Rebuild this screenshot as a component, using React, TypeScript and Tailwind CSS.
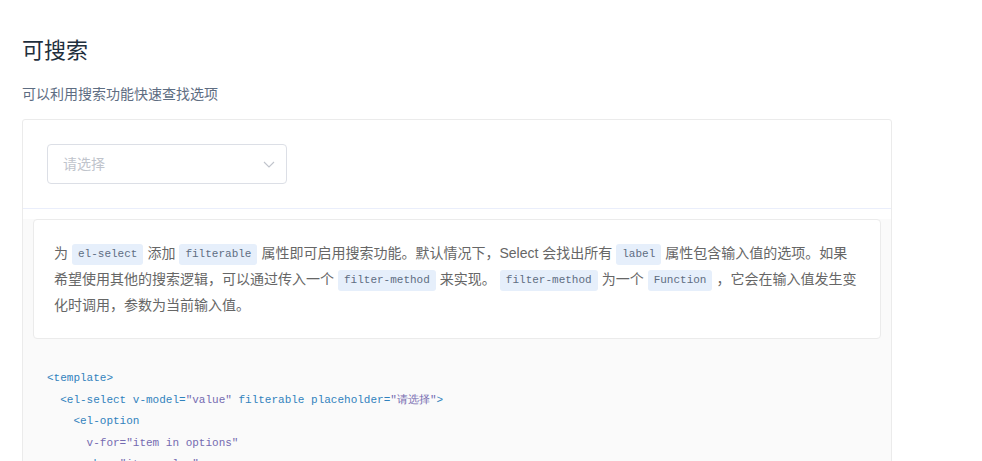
import React from "react";

const TAG = "text-[#3182bd]";
const STR = "text-[#756bb1]";

function InlineCode({ children }: { children: React.ReactNode }) {
  return (
    <code className="mx-[4px] inline-block rounded-[3px] bg-[#e6effb] px-[6px] py-[1px] align-[1px] font-['Liberation_Mono',monospace] text-[11px] leading-[19px] text-[#5e6d82]">
      {children}
    </code>
  );
}

function Chevron() {
  return (
    <svg width="12" height="7" viewBox="0 0 12 7" fill="none">
      <path d="M1 1l5 5 5-5" stroke="#c0c4cc" strokeWidth="1.1" />
    </svg>
  );
}

export default function App() {
  return (
    <div className="h-[461px] w-[982px] overflow-hidden bg-white px-[22px] pt-[34px] font-['Liberation_Sans','Noto_Sans_CJK_SC',sans-serif]">
      <h3 className="text-[22px] font-normal leading-[33px] text-[#1f2f3d]">可搜索</h3>
      <p className="mt-[17px] text-[14px] leading-[21px] text-[#5e6d82]">可以利用搜索功能快速查找选项</p>

      <div className="mt-[14px] w-[870px] rounded-[3px] border border-[#ebebeb]">
        {/* Demo */}
        <div className="border-b border-[#eaeefb] p-[24px]">
          <div className="flex h-[40px] w-[240px] items-center justify-between rounded-[4px] border border-[#dcdfe6] pl-[15px] pr-[11px]">
            <span className="text-[14px] text-[#c0c4cc]">请选择</span>
            <Chevron />
          </div>
        </div>

        {/* Meta */}
        <div className="bg-[#fafafa]">
          <div className="m-[10px] rounded-[4px] border border-[#ebebeb] bg-white p-[20px]">
            <p className="text-[14px] leading-[26px] text-[#666]">
              为<InlineCode>el-select</InlineCode>添加<InlineCode>filterable</InlineCode>属性即可启用搜索功能。默认情况下，Select 会找出所有<InlineCode>label</InlineCode>属性包含输入值的选项。如果希望使用其他的搜索逻辑，可以通过传入一个<InlineCode>filter-method</InlineCode>来实现。
              <InlineCode>filter-method</InlineCode>为一个<InlineCode>Function</InlineCode>，它会在输入值发生变
              <br />
              化时调用，参数为当前输入值。
            </p>
          </div>

          <pre className="px-[24px] pb-[18px] pt-[19px] font-['Liberation_Mono','Noto_Sans_CJK_SC',monospace] text-[11px] leading-[21.6px] text-[#5e6d82]">
            <code>
              <span className={TAG}>&lt;template&gt;</span>
              {"\n  "}
              <span className={TAG}>&lt;el-select v-model=</span>
              <span className={STR}>"value"</span>
              <span className={TAG}> filterable placeholder=</span>
              <span className={STR}>"请选择"</span>
              <span className={TAG}>&gt;</span>
              {"\n    "}
              <span className={TAG}>&lt;el-option</span>
              {"\n      "}
              <span className={STR}>v-for="item in options"</span>
              {"\n      "}
              <span className={TAG}>:key=</span>
              <span className={STR}>"item.value"</span>
              {"\n      "}
              <span className={TAG}>:label=</span>
              <span className={STR}>"item.label"</span>
              {"\n      "}
              <span className={TAG}>:value=</span>
              <span className={STR}>"item.value"</span>
              <span className={TAG}>&gt;</span>
              {"\n    "}
              <span className={TAG}>&lt;/el-option&gt;</span>
              {"\n  "}
              <span className={TAG}>&lt;/el-select&gt;</span>
              {"\n"}
              <span className={TAG}>&lt;/template&gt;</span>
            </code>
          </pre>
        </div>
      </div>
    </div>
  );
}
